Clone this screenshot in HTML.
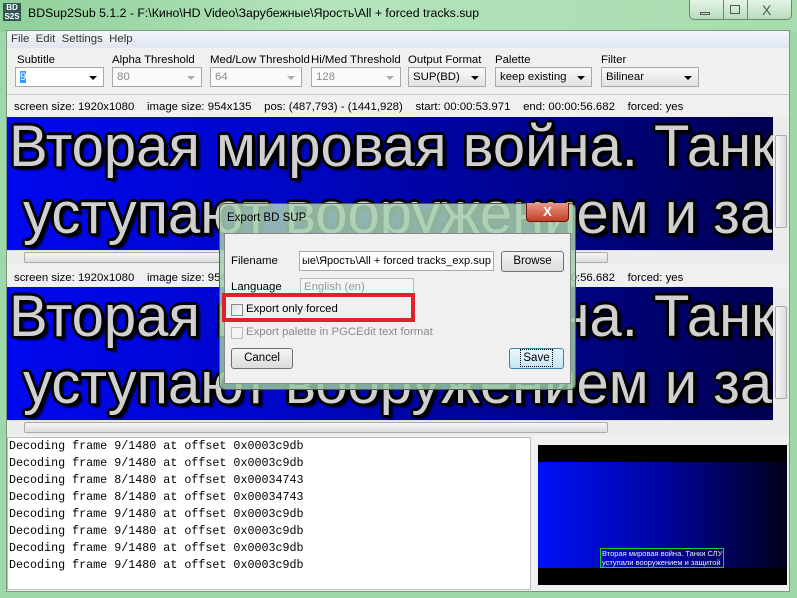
<!DOCTYPE html>
<html><head><meta charset="utf-8"><style>
*{box-sizing:border-box;margin:0;padding:0}
body{width:797px;height:598px;overflow:hidden;position:relative;background:#9fd8a8;font-family:"Liberation Sans","DejaVu Sans",sans-serif;font-size:11.4px;color:#000}
.a{position:absolute}
.t{white-space:nowrap}
.combo{position:absolute;height:20px;border:1px solid #a8a8a8;background:#fff;font-size:11.4px;padding:3px 4px;white-space:nowrap}
.combo.dis{color:#8a8a8a;background:#fafafa}
.combo:after{content:"";position:absolute;right:6px;top:8px;border-left:4px solid transparent;border-right:4px solid transparent;border-top:4px solid #000}
.combo.dis:after{border-top-color:#aaa}
.combo.btn{background:linear-gradient(#fafafa,#e2e2e2)}
.panel{position:absolute;left:7px;width:766px;background:linear-gradient(90deg,#0008f0 0%,#0006c8 35%,#00038a 70%,#000050 100%);overflow:hidden}
.big{position:absolute;font-size:58px;color:#d0d0d0;white-space:nowrap;font-family:"Liberation Sans",sans-serif;text-shadow:-2px -2px 0 #000,2px -2px 0 #000,-2px 2px 0 #000,2px 2px 0 #000,0 3px 0 #000,3px 0 0 #000,-3px 0 0 #000,0 -3px 0 #000,4px 4px 2px #000}
.hs{position:absolute;left:7px;width:766px;height:15px;background:#ececec;border-top:1px solid #ddd}
.vs{position:absolute;left:773px;width:16px;background:#ececec}
.btnw{position:absolute;height:21px;border:1px solid #707070;border-radius:3px;background:linear-gradient(#f4f4f4,#dcdcdc);text-align:center;font-size:11.5px;line-height:19px}
.log{font-family:"Liberation Mono",monospace;font-size:11.7px;line-height:17px}
</style></head><body>
<div class="a" style="left:0;top:0;width:797px;height:32px;background:linear-gradient(90deg,#8fcf99,#b4e4bb 40%,#a6dcae)"></div>
<div class="a" style="left:3px;top:3px;width:18px;height:18px;background:#355;color:#fff;font-size:8px;font-weight:bold;line-height:9px;text-align:center">BD<br>S2S</div>
<div class="a t" style="left:28px;top:6px;font-size:12.3px">BDSup2Sub 5.1.2 - F:\Кино\HD Video\Зарубежные\Ярость\All + forced tracks.sup</div>
<div class="a" style="left:689px;top:0;width:103px;height:20px;border:1px solid #6a8a70;border-top:none;border-radius:0 0 5px 5px;background:linear-gradient(#e4f4e6,#b8dcbc)"></div>
<div class="a" style="left:723px;top:0;width:1px;height:20px;background:#6a8a70"></div>
<div class="a" style="left:747px;top:0;width:1px;height:20px;background:#6a8a70"></div>
<div class="a" style="left:700px;top:12px;width:10px;height:3px;border:1px solid #555"></div>
<div class="a" style="left:730px;top:5px;width:10px;height:9px;border:1px solid #555"></div>
<div class="a t" style="left:762px;top:2px;font-size:14px;color:#555">X</div>
<div class="a" style="left:6px;top:30px;width:784px;height:562px;background:#f0f0f0;border:1px solid #7a9a80"></div>
<div class="a" style="left:7px;top:31px;width:782px;height:17px;background:linear-gradient(#f4f6fa,#dfe6f2)"></div>
<div class="a t" style="left:11px;top:33px;color:#333">File&nbsp;&nbsp;Edit&nbsp;&nbsp;Settings&nbsp;&nbsp;Help</div>
<div class="a t" style="left:17px;top:54px">Subtitle</div>
<div class="a t" style="left:112px;top:54px">Alpha Threshold</div>
<div class="a t" style="left:210px;top:54px">Med/Low Threshold</div>
<div class="a t" style="left:311px;top:54px">Hi/Med Threshold</div>
<div class="a t" style="left:408px;top:54px">Output Format</div>
<div class="a t" style="left:495px;top:54px">Palette</div>
<div class="a t" style="left:601px;top:54px">Filter</div>
<div class="combo" style="left:15px;top:67px;width:89px"><span style="background:#3399ff;color:#fff">9</span></div>
<div class="combo dis" style="left:112px;top:67px;width:90px">80</div>
<div class="combo dis" style="left:210px;top:67px;width:92px">64</div>
<div class="combo dis" style="left:311px;top:67px;width:90px">128</div>
<div class="combo btn" style="left:408px;top:67px;width:78px">SUP(BD)</div>
<div class="combo btn" style="left:495px;top:67px;width:97px">keep existing</div>
<div class="combo btn" style="left:601px;top:67px;width:98px">Bilinear</div>
<div class="a" style="left:7px;top:94px;width:782px;height:1px;background:#ccc"></div>
<div class="a t" style="left:14px;top:101px">screen size: 1920x1080&nbsp;&nbsp;&nbsp; image size: 954x135&nbsp;&nbsp;&nbsp; pos: (487,793) - (1441,928)&nbsp;&nbsp;&nbsp; start: 00:00:53.971&nbsp;&nbsp;&nbsp; end: 00:00:56.682&nbsp;&nbsp;&nbsp; forced: yes</div>
<div class="panel" style="top:117px;height:133px">
<div class="big" style="left:2px;top:-4px">Вторая мировая война. Танк</div>
<div class="big" style="left:16px;top:63px">уступают вооружением и за</div>
</div>
<div class="hs" style="top:250px"></div>
<div class="a" style="left:24px;top:252px;width:584px;height:11px;border:1px solid #aaa;border-radius:2px;background:linear-gradient(#f6f6f6,#dcdcdc)"></div>
<div class="vs" style="top:117px;height:148px"></div>
<div class="a" style="left:775px;top:135px;width:12px;height:93px;border:1px solid #aaa;border-radius:2px;background:linear-gradient(90deg,#f6f6f6,#dcdcdc)"></div>
<div class="a t" style="left:14px;top:272px">screen size: 1920x1080&nbsp;&nbsp;&nbsp; image size: 954x135&nbsp;&nbsp;&nbsp; pos: (487,793) - (1441,928)&nbsp;&nbsp;&nbsp; start: 00:00:53.971&nbsp;&nbsp;&nbsp; end: 00:00:56.682&nbsp;&nbsp;&nbsp; forced: yes</div>
<div class="panel" style="top:287px;height:133px">
<div class="big" style="left:2px;top:-4px">Вторая мировая война. Танк</div>
<div class="big" style="left:16px;top:63px">уступают вооружением и за</div>
</div>
<div class="hs" style="top:420px"></div>
<div class="a" style="left:24px;top:422px;width:584px;height:11px;border:1px solid #aaa;border-radius:2px;background:linear-gradient(#f6f6f6,#dcdcdc)"></div>
<div class="vs" style="top:287px;height:148px"></div>
<div class="a" style="left:775px;top:306px;width:12px;height:93px;border:1px solid #aaa;border-radius:2px;background:linear-gradient(90deg,#f6f6f6,#dcdcdc)"></div>
<div class="a" style="left:7px;top:437px;width:524px;height:153px;background:#fff;border:1px solid #bbb"></div>
<div class="a log t" style="left:9px;top:438px">Decoding frame 9/1480 at offset 0x0003c9db<br>Decoding frame 9/1480 at offset 0x0003c9db<br>Decoding frame 8/1480 at offset 0x00034743<br>Decoding frame 8/1480 at offset 0x00034743<br>Decoding frame 9/1480 at offset 0x0003c9db<br>Decoding frame 9/1480 at offset 0x0003c9db<br>Decoding frame 9/1480 at offset 0x0003c9db<br>Decoding frame 9/1480 at offset 0x0003c9db</div>
<div class="a" style="left:538px;top:445px;width:249px;height:140px;background:#000"></div>
<div class="a" style="left:538px;top:462px;width:249px;height:106px;background:linear-gradient(90deg,#0010f8,#0004a0 50%,#00001a)"></div>
<div class="a t" style="left:600px;top:548px;font-size:7.5px;line-height:9px;color:#eee;border:1px solid #2c2;padding:0 1px">Вторая мировая война. Танки СЛУ<br>уступали вооружением и защитой</div>
<div class="a" style="left:219px;top:203px;width:357px;height:187px;border:1px solid #555;border-radius:6px;background:linear-gradient(rgba(170,210,180,.85),rgba(150,200,165,.85))"></div>
<div class="a t" style="left:227px;top:212px;font-size:11.5px">Export BD SUP</div>
<div class="a" style="left:526px;top:203px;width:43px;height:19px;border:1px solid #6b1a10;border-top:none;border-radius:0 0 4px 4px;background:linear-gradient(#e89a88,#c0402a);color:#fff;text-align:center;font-weight:bold;font-size:13px;line-height:18px">X</div>
<div class="a" style="left:224px;top:233px;width:347px;height:151px;background:#f0f0f0;border:1px solid #888"></div>
<div class="a t" style="left:231px;top:255px">Filename</div>
<div class="a t" style="left:299px;top:251px;width:195px;height:20px;border:1px solid #aaa;background:#fff;padding:3px 2px;overflow:hidden;font-size:11px">ые\Ярость\All + forced tracks_exp.sup</div>
<div class="btnw" style="left:501px;top:251px;width:63px">Browse</div>
<div class="a t" style="left:231px;top:281px">Language</div>
<div class="a t" style="left:300px;top:278px;width:114px;height:19px;border:1px solid #bbb;background:#f4f4f4;color:#999;padding:2px 3px">English (en)</div>
<div class="a" style="left:222px;top:293px;width:193px;height:29px;background:#f0f0f0;border:4px solid #e0202a"></div>
<div class="a" style="left:231px;top:304px;width:12px;height:12px;border:1px solid #888;background:linear-gradient(135deg,#ddd,#fff)"></div>
<div class="a t" style="left:246px;top:303px">Export only forced</div>
<div class="a" style="left:231px;top:327px;width:12px;height:12px;border:1px solid #bbb;background:#f4f4f4"></div>
<div class="a t" style="left:246px;top:326px;color:#8a8a8a">Export palette in PGCEdit text format</div>
<div class="btnw" style="left:231px;top:348px;width:62px">Cancel</div>
<div class="btnw" style="left:509px;top:348px;width:55px;border-color:#3c7fb1;background:linear-gradient(#eaf6fd,#c4e5f6)"><span style="outline:1px dotted #000;outline-offset:2px">Save</span></div>
</body></html>
